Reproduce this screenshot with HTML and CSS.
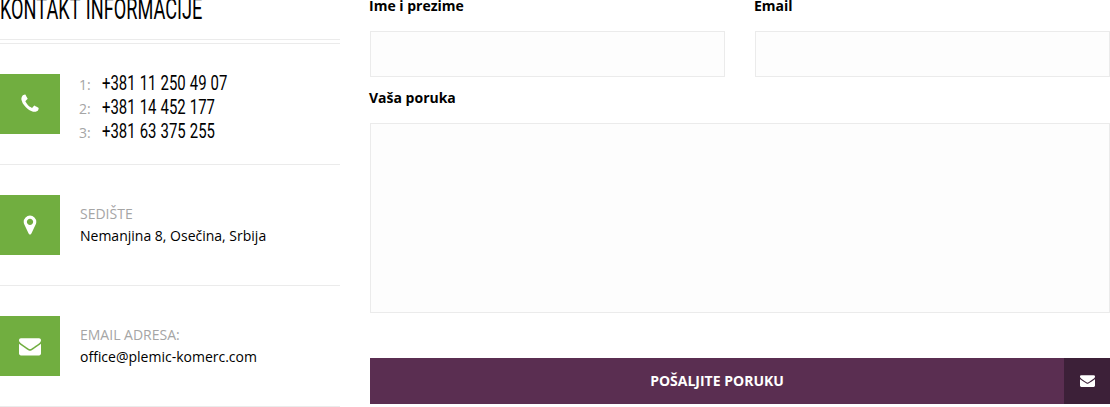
FILE: index.html
```html
<!DOCTYPE html>
<html lang="sr">
<head>
    <meta charset="UTF-8">
    <meta name="viewport" content="width=device-width, initial-scale=1.0">
    <title>Kontakt</title>
    <link rel="stylesheet" href="styles.css">
</head>
<body>
    <div class="contact">
        <div class="contact-info">
            <h3 class="info-title"><span>KONTAKT INFORMACIJE</span></h3>

            <div class="info-item">
                <div class="info-icon">
                    <svg viewBox="0 0 1792 1792"><path d="M1600 1240q0 27-10 70.5t-21 68.5q-21 50-122 106-94 51-186 51-27 0-53-3.5t-57.5-12.5-47-14.5-55.5-20.5-49-18q-98-35-175-83-127-79-264-216t-216-264q-48-77-83-175-3-9-18-49t-20.5-55.5-14.5-47-12.5-57.5-3.5-53q0-92 51-186 56-101 106-122 25-11 68.5-21t70.5-10q14 0 21 3 18 6 53 76 11 19 30 54t35 63.5 31 53.5q3 4 17.5 25t21.5 35.5 7 28.5q0 20-28.5 50t-62 55-62 53-28.5 46q0 9 5 22.5t8.5 20.5 14 24 11.5 19q76 137 174 235t235 174q2 1 19 11.5t24 14 20.5 8.5 22.5 5q18 0 46-28.5t53-62 55-62 50-28.5q14 0 28.5 7t35.5 21.5 25 17.5q25 15 53.5 31t63.5 35 54 30q70 35 76 53 3 7 3 21z"/></svg>
                </div>
                <ul class="phone-list">
                    <li><span class="phone-label">1:</span><span class="phone">+381 11 250 49 07</span></li>
                    <li><span class="phone-label">2:</span><span class="phone">+381 14 452 177</span></li>
                    <li><span class="phone-label">3:</span><span class="phone">+381 63 375 255</span></li>
                </ul>
            </div>

            <div class="info-item">
                <div class="info-icon">
                    <svg viewBox="0 0 1792 1792"><path d="M1152 640q0-106-75-181t-181-75-181 75-75 181 75 181 181 75 181-75 75-181zm256 0q0 109-33 179l-364 774q-16 33-47.5 52t-67.5 19-67.5-19-46.5-52l-365-774q-33-70-33-179 0-212 150-362t362-150 362 150 150 362z"/></svg>
                </div>
                <div class="info-text">
                    <span>SEDIŠTE</span>
                    <p>Nemanjina 8, Osečina, Srbija</p>
                </div>
            </div>

            <div class="info-item">
                <div class="info-icon">
                    <svg viewBox="0 0 1792 1792"><path d="M1792 710v794q0 66-47 113t-113 47h-1472q-66 0-113-47t-47-113v-794q44 49 101 87 362 246 497 345 57 42 92.5 65.5t94.5 48 110 24.5h2q51 0 110-24.5t94.5-48 92.5-65.5q170-123 498-345 57-39 100-87zm0-294q0 79-49 151t-122 123q-376 261-468 325-10 7-42.5 31t-54 38.5-52 32.5-57.5 27-50 9h-2q-23 0-50-9t-57.5-27-52-32.5-54-38.5-42.5-31q-91-64-262-182.5t-205-142.5q-62-42-117-115.5t-55-136.5q0-78 41.5-130t118.5-52h1472q65 0 112.5 47t47.5 113z"/></svg>
                </div>
                <div class="info-text">
                    <span>EMAIL ADRESA:</span>
                    <p>office@plemic-komerc.com</p>
                </div>
            </div>
        </div>

        <form class="contact-form">
            <div class="form-row">
                <div class="form-group">
                    <label for="name">Ime i prezime</label>
                    <input type="text" id="name">
                </div>
                <div class="form-group">
                    <label for="email">Email</label>
                    <input type="text" id="email">
                </div>
            </div>
            <div class="form-group">
                <label for="message">Vaša poruka</label>
                <textarea id="message"></textarea>
            </div>
            <button type="submit" class="submit-button">
                <span class="submit-text">POŠALJITE PORUKU</span>
                <span class="submit-icon">
                    <svg viewBox="0 0 1792 1792"><path d="M1792 710v794q0 66-47 113t-113 47h-1472q-66 0-113-47t-47-113v-794q44 49 101 87 362 246 497 345 57 42 92.5 65.5t94.5 48 110 24.5h2q51 0 110-24.5t94.5-48 92.5-65.5q170-123 498-345 57-39 100-87zm0-294q0 79-49 151t-122 123q-376 261-468 325-10 7-42.5 31t-54 38.5-52 32.5-57.5 27-50 9h-2q-23 0-50-9t-57.5-27-52-32.5-54-38.5-42.5-31q-91-64-262-182.5t-205-142.5q-62-42-117-115.5t-55-136.5q0-78 41.5-130t118.5-52h1472q65 0 112.5 47t47.5 113z"/></svg>
                </span>
            </button>
        </form>
    </div>
</body>
</html>
```

FILE: styles.css
```css
* {
    margin: 0;
    padding: 0;
    box-sizing: border-box;
}

body {
    font-family: 'Open Sans', 'Noto Sans', sans-serif;
    font-size: 14px;
    line-height: 22px;
    color: #000;
    background: #fff;
    overflow: hidden;
}

.contact {
    display: grid;
    grid-template-columns: 340px 740px;
    column-gap: 30px;
    align-items: start;
}

/* Contact info */
.info-title {
    height: 44px;
    border-bottom: 1px solid #ebebeb;
    font-family: Roboto, sans-serif;
    font-size: 30px;
    font-weight: 400;
    line-height: 17px;
    white-space: nowrap;
}

/* second line of the title divider */
.info-title::after {
    content: "";
    display: block;
    height: 1px;
    margin-top: 22px;
    background: #ebebeb;
}

/* condensed headline look */
.info-title span {
    display: block;
    height: 17px;
    word-spacing: 2px;
    transform: scaleX(0.605);
    transform-origin: left center;
}

.info-item {
    display: flex;
    height: 121px;
    padding: 30px 0;
    border-bottom: 1px solid #ebebeb;
}

.info-icon {
    display: flex;
    align-items: center;
    justify-content: center;
    flex-shrink: 0;
    width: 60px;
    height: 60px;
    margin-right: 20px;
    background: #71ae40;
}

.info-icon svg {
    width: 22px;
    height: 22px;
    fill: #fff;
}

.info-text {
    padding-top: 8px;
}

.info-text span,
.phone-label {
    color: #a5a5a5;
}

.phone-list {
    list-style: none;
    margin: -3px 0 0 -1px;
}

.phone-list li {
    display: flex;
    align-items: baseline;
    height: 24px;
    line-height: 24px;
}

.phone-label {
    width: 22.5px;
}

.phone {
    font-family: Roboto, sans-serif;
    font-size: 20.5px;
    font-weight: 450;
    white-space: nowrap;
    word-spacing: 0.5px;
    transform: scaleX(0.728);
    transform-origin: left center;
}

/* Form */
.form-row {
    display: grid;
    grid-template-columns: 1fr 1fr;
    column-gap: 30px;
}

.contact-form > .form-group {
    margin-top: 10px;
}

.form-group label {
    display: block;
    height: 36px;
    margin-left: -1px;
    font-weight: 700;
}

.form-row label {
    height: 31px;
    line-height: 12px;
}

.form-group input,
.form-group textarea {
    display: block;
    width: 100%;
    height: 46px;
    border: 1px solid #ebebeb;
    border-radius: 0;
    background: #fdfdfd;
    outline: none;
    resize: none;
}

.form-group textarea {
    height: 190px;
}

.submit-button {
    display: flex;
    width: 100%;
    height: 46px;
    margin-top: 45px;
    border: none;
    background: #5a2e51;
    color: #fff;
    font-family: inherit;
    font-size: 14px;
    font-weight: 700;
    line-height: 46px;
    cursor: pointer;
}

.submit-text {
    flex: 1;
}

.submit-icon {
    display: flex;
    align-items: center;
    justify-content: center;
    width: 46px;
    height: 46px;
    padding-bottom: 2px;
    background: #3c2038;
}

.submit-icon svg {
    width: 15px;
    height: 15px;
    fill: #fff;
}
```
